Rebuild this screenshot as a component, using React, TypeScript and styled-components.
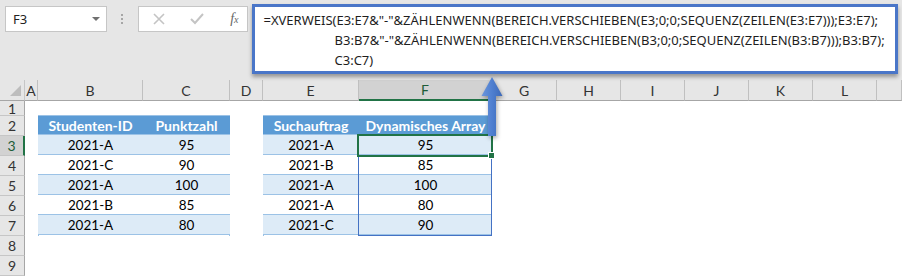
import React from 'react'
import styled, { createGlobalStyle, css } from 'styled-components'

const GlobalStyle = createGlobalStyle`
  html, body {
    margin: 0;
    padding: 0;
    background: #ffffff;
  }
  body {
    width: 902px;
    height: 276px;
    overflow: hidden;
    font-family: Lato, 'Liberation Sans', sans-serif;
  }
`

const GREEN = '#217346'
const COLUMNS = ['', 'A', 'B', 'C', 'D', 'E', 'F', 'G', 'H', 'I', 'J', 'K', 'L', '']
const WIDTHS = [25, 13, 105, 87, 33, 96, 133, 65, 64, 64, 64, 64, 64]
const ROWS = [1, 2, 3, 4, 5, 6, 7, 8, 9]

const students = [
  ['2021-A', '95'],
  ['2021-C', '90'],
  ['2021-A', '100'],
  ['2021-B', '85'],
  ['2021-A', '80'],
]

const lookups = [
  ['2021-A', '95'],
  ['2021-B', '85'],
  ['2021-A', '100'],
  ['2021-A', '80'],
  ['2021-C', '90'],
]

const App: React.FC = () => {
  return (
    <Page>
      <GlobalStyle />
      <TopBar>
        <NameBox>
          <span>F3</span>
          <DropCaret />
        </NameBox>
        <Grip>
          <i />
          <i />
          <i />
        </Grip>
        <FuncBox>
          <svg width='12' height='12' viewBox='0 0 12 12'>
            <path d='M1 1 L11 11 M11 1 L1 11' stroke='#c4c4c4' strokeWidth='1.6' />
          </svg>
          <svg width='14' height='12' viewBox='0 0 14 12'>
            <path d='M1 6 L5 10 L13 1' stroke='#c4c4c4' strokeWidth='2' fill='none' />
          </svg>
          <Fx>
            f<sub>x</sub>
          </Fx>
        </FuncBox>
        <FormulaBox>
          <FormulaLine>=XVERWEIS(E3:E7&amp;"-"&amp;ZÄHLENWENN(BEREICH.VERSCHIEBEN(E3;0;0;SEQUENZ(ZEILEN(E3:E7)));E3:E7);</FormulaLine>
          <FormulaLine indent>B3:B7&amp;"-"&amp;ZÄHLENWENN(BEREICH.VERSCHIEBEN(B3;0;0;SEQUENZ(ZEILEN(B3:B7)));B3:B7);</FormulaLine>
          <FormulaLine indent>C3:C7)</FormulaLine>
        </FormulaBox>
      </TopBar>

      <Sheet>
        <Corner>
          <svg width='11' height='11' viewBox='0 0 11 11'>
            <path d='M11 0 L11 11 L0 11 Z' fill='#bdbdbd' />
          </svg>
        </Corner>
        {COLUMNS.slice(1).map((c, i) => (
          <ColHeader key={i} selected={c === 'F'}>
            {c}
          </ColHeader>
        ))}
        {ROWS.map((r) => (
          <RowHeader key={r} style={{ gridRow: r + 1 }} selected={r === 3}>
            {r}
          </RowHeader>
        ))}

        <Table col='3 / 5' widths='105px 87px'>
          <HeadRow>
            <span>Studenten-ID</span>
            <span>Punktzahl</span>
          </HeadRow>
          {students.map(([id, score], i) => (
            <DataRow key={i} band={i % 2 === 0}>
              <span>{id}</span>
              <span>{score}</span>
            </DataRow>
          ))}
        </Table>

        <Table col='6 / 8' widths='96px 133px'>
          <HeadRow>
            <span>Suchauftrag</span>
            <span>Dynamisches Array</span>
          </HeadRow>
          {lookups.map(([id, score], i) => (
            <DataRow key={i} band={i % 2 === 0}>
              <span>{id}</span>
              <span>{score}</span>
            </DataRow>
          ))}
        </Table>

        <SpillBorder />
        <Selection>
          <FillHandle />
        </Selection>
      </Sheet>

      <Arrow width='26' height='64' viewBox='0 0 26 64'>
        <defs>
          <linearGradient id='arrowFill' x1='0' y1='0' x2='1' y2='0'>
            <stop offset='0' stopColor='#6b96dc' />
            <stop offset='0.5' stopColor='#4f7fd0' />
            <stop offset='1' stopColor='#3d69b8' />
          </linearGradient>
        </defs>
        <path d='M12 1 L22.5 20 L16 20 L16 60 L8 60 L8 20 L1.5 20 Z' fill='url(#arrowFill)' />
      </Arrow>
    </Page>
  )
}

const Page = styled.div`
  position: relative;
  width: 902px;
  height: 276px;
  overflow: hidden;
  background: #ffffff;
`

const TopBar = styled.div`
  height: 80px;
  box-sizing: border-box;
  background: #e6e6e6;
  display: flex;
  align-items: flex-start;
  padding: 6px 4px 0 5px;
  position: relative;
  z-index: 2;
`

const boxBase = css`
  box-sizing: border-box;
  height: 26px;
  background: #ffffff;
  border: 1px solid #c6c6c6;
`

const NameBox = styled.div`
  ${boxBase};
  width: 102px;
  display: flex;
  align-items: center;
  justify-content: space-between;
  padding: 0 6px 0 7px;
  font-family: 'Noto Sans', 'Open Sans', sans-serif;
  font-size: 13px;
  color: #222;
`

const DropCaret = styled.i`
  width: 0;
  height: 0;
  border-left: 4px solid transparent;
  border-right: 4px solid transparent;
  border-top: 4px solid #707070;
`

const Grip = styled.div`
  width: 31px;
  height: 26px;
  display: flex;
  flex-direction: column;
  align-items: center;
  justify-content: center;
  gap: 2px;
  i {
    width: 2px;
    height: 2px;
    background: #a6a6a6;
  }
`

const FuncBox = styled.div`
  ${boxBase};
  width: 110px;
  display: flex;
  align-items: center;
  justify-content: space-between;
  padding: 0 8px 0 14px;
`

const Fx = styled.span`
  font-family: 'Liberation Serif', serif;
  font-style: italic;
  font-size: 14px;
  color: #666;
  sub {
    font-size: 10px;
    vertical-align: 0;
  }
`

const FormulaBox = styled.div`
  box-sizing: border-box;
  width: 648px;
  height: 70px;
  margin: -2px 0 0 4px;
  border: 3px solid #4a76c8;
  background: #ffffff;
  box-shadow: 0 3px 4px rgba(0, 0, 0, 0.35);
  padding: 3px 0 0 9px;
  font-family: 'Noto Sans', 'Open Sans', sans-serif;
  font-size: 13px;
  color: #1e1e1e;
`

const FormulaLine = styled.div<{ indent?: boolean }>`
  height: 20px;
  line-height: 20px;
  white-space: nowrap;
  padding-left: ${(p) => (p.indent ? 71 : 0)}px;
`

const Sheet = styled.div`
  display: grid;
  grid-template-columns: ${WIDTHS.map((w) => `${w}px`).join(' ')} 1fr;
  grid-template-rows: 21px 15px repeat(8, 20px);
  height: 196px;
`

const Corner = styled.div`
  background: #e6e6e6;
  border-right: 1px solid #c6c6c6;
  border-bottom: 1px solid #a6a6a6;
  box-sizing: border-box;
  display: flex;
  align-items: flex-end;
  justify-content: flex-end;
  padding: 0 3px 4px 0;
`

const ColHeader = styled.div<{ selected?: boolean }>`
  box-sizing: border-box;
  background: ${(p) => (p.selected ? '#d2d2d2' : '#e6e6e6')};
  border-right: 1px solid #c0c0c0;
  border-bottom: ${(p) => (p.selected ? `2px solid ${GREEN}` : '1px solid #a6a6a6')};
  display: flex;
  align-items: center;
  justify-content: center;
  font-size: 14px;
  color: ${(p) => (p.selected ? '#1d5c38' : '#333')};
`

const RowHeader = styled.div<{ selected?: boolean }>`
  grid-column: 1;
  box-sizing: border-box;
  background: ${(p) => (p.selected ? '#d2d2d2' : '#e6e6e6')};
  border-bottom: 1px solid #c6c6c6;
  border-right: ${(p) => (p.selected ? `2px solid ${GREEN}` : '1px solid #a6a6a6')};
  display: flex;
  align-items: center;
  justify-content: center;
  font-size: 14px;
  color: ${(p) => (p.selected ? '#1d5c38' : '#333')};
`

const Table = styled.div<{ col: string; widths: string }>`
  grid-column: ${(p) => p.col};
  grid-row: 3 / 9;
  display: grid;
  grid-template-rows: repeat(6, 20px);
  border-left: 1px solid #9bc2e6;
  border-right: 1px solid #9bc2e6;
  margin-top: -1px;
  > div {
    display: grid;
    grid-template-columns: ${(p) => p.widths};
    box-sizing: border-box;
    border-bottom: 1px solid #9bc2e6;
    margin-right: -1px;
    margin-left: -1px;
  }
  span {
    display: flex;
    align-items: center;
    justify-content: center;
    font-size: 13.5px;
  }
`

const HeadRow = styled.div`
  background: #5b9bd5;
  border-top: 1px solid #9bc2e6;
  span {
    color: #ffffff;
    font-weight: 700;
    font-size: 14px;
  }
`

const DataRow = styled.div<{ band: boolean }>`
  background: ${(p) => (p.band ? '#ddebf7' : '#ffffff')};
  span {
    color: #000;
  }
`

const SpillBorder = styled.div`
  grid-column: 7;
  grid-row: 4 / 9;
  border: 1px solid #4472c4;
  margin: -1px 0 0 -1px;
  pointer-events: none;
  z-index: 1;
`

const Selection = styled.div`
  grid-column: 7;
  grid-row: 4;
  position: relative;
  border: 2px solid ${GREEN};
  margin: -2px -1px -1px -2px;
  pointer-events: none;
  z-index: 2;
`

const FillHandle = styled.i`
  position: absolute;
  right: -4px;
  bottom: -4px;
  width: 5px;
  height: 5px;
  background: ${GREEN};
  border: 1px solid #ffffff;
`

const Arrow = styled.svg`
  position: absolute;
  left: 480px;
  top: 76px;
  z-index: 3;
  filter: drop-shadow(1px 2px 2px rgba(0, 0, 0, 0.35));
`

export default App
